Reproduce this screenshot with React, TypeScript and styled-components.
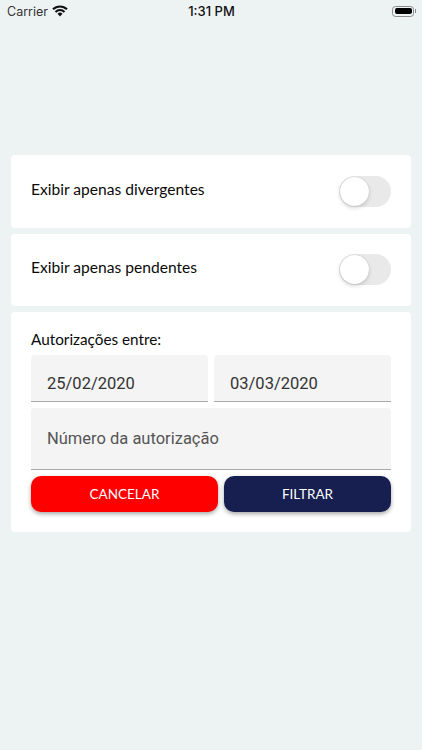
import styled, { createGlobalStyle } from "styled-components";

const GlobalStyle = createGlobalStyle`
  html, body {
    margin: 0;
    padding: 0;
    background-color: #edf3f3;
  }
`;

const Page = styled.div`
  display: flex;
  flex-direction: column;
  width: 422px;
  height: 750px;
  overflow: hidden;
  background-color: #edf3f3;
  font-family: "Lato", "Open Sans", sans-serif;
`;

const StatusBar = styled.div`
  display: grid;
  grid-template-columns: 1fr auto 1fr;
  align-items: center;
  height: 22px;
  padding: 0 6px 0 7px;
  font-family: "Inter", "Liberation Sans", sans-serif;
  color: #111;
`;

const Carrier = styled.div`
  display: flex;
  align-items: center;
  gap: 4px;
  font-size: 12.5px;
  color: #333;
`;

const Clock = styled.div`
  font-size: 13px;
  font-weight: 500;
`;

const Battery = styled.div`
  justify-self: end;
  display: flex;
  align-items: center;
`;

const BatteryBody = styled.div`
  box-sizing: border-box;
  width: 22px;
  height: 11px;
  padding: 1.5px;
  border: 1px solid #8a8a8a;
  border-radius: 3.5px;

  &::before {
    content: "";
    display: block;
    height: 100%;
    background-color: #000;
    border-radius: 2px;
  }
`;

const BatteryTip = styled.div`
  width: 1px;
  height: 4px;
  margin-left: 1px;
  background-color: #8a8a8a;
`;

const Content = styled.div`
  display: flex;
  flex-direction: column;
  gap: 6px;
  padding: 133px 11px 0;
`;

const Card = styled.div`
  background-color: #fff;
  border-radius: 4px;
`;

const ToggleCard = styled(Card)`
  display: flex;
  align-items: center;
  justify-content: space-between;
  height: 72.5px;
  box-sizing: border-box;
  padding: 0 20px;
`;

const ToggleLabel = styled.div`
  font-size: 15.6px;
  color: #0a0a0a;
  margin-top: -5px;
`;

const Track = styled.div`
  width: 52px;
  height: 31px;
  border-radius: 16px;
  background-color: #e9e9ea;
  display: flex;
  align-items: center;
  padding-left: 1px;
  box-sizing: border-box;
`;

const Knob = styled.div`
  width: 29px;
  height: 29px;
  border-radius: 50%;
  background-color: #fff;
  box-shadow: 0 2px 4px rgba(0, 0, 0, 0.16), 0 0 1px rgba(0, 0, 0, 0.2);
`;

const FilterCard = styled(Card)`
  display: flex;
  flex-direction: column;
  gap: 6px;
  padding: 17px 20px 20px;
`;

const FilterTitle = styled.div`
  font-size: 15.3px;
  line-height: 20px;
  color: #0a0a0a;
`;

const Row = styled.div`
  display: flex;
  gap: 6px;
`;

const Field = styled.div<{ $height: number; $muted?: boolean; $drop?: number }>`
  flex: 1;
  display: flex;
  align-items: center;
  height: ${({ $height }) => $height}px;
  box-sizing: border-box;
  padding: ${({ $drop }) => $drop ?? 0}px 16px 0;
  background-color: #f4f4f4;
  border-bottom: 1px solid #a9a9a9;
  border-radius: 4px 4px 0 0;
  font-family: "Roboto", "Liberation Sans", sans-serif;
  font-size: 16.5px;
  color: ${({ $muted }) => ($muted ? "#555" : "#333")};
`;

const Button = styled.div<{ $color: string; $grow: number }>`
  flex: ${({ $grow }) => $grow} 1 0;
  display: flex;
  align-items: center;
  justify-content: center;
  height: 36.5px;
  border-radius: 10px;
  background-color: ${({ $color }) => $color};
  box-shadow: 0 2px 4px rgba(0, 0, 0, 0.35);
  font-size: 13.5px;
  color: #fff;
`;

const WifiIcon = () => (
  <svg width="16" height="12" viewBox="0 0 16 12">
    <g fill="none" stroke="#111" strokeWidth="2.1">
      <path d="M1 4.300A10 10 0 0 1 15 4.300" />
      <path d="M3.500 6.900A6.400 6.400 0 0 1 12.500 6.900" />
    </g>
    <path d="M5.500 8.700A3.500 3.500 0 0 1 10.500 8.700L8 11.500z" fill="#111" />
  </svg>
);

const Toggle = () => (
  <Track>
    <Knob />
  </Track>
);

export default function App() {
  return (
    <Page>
      <GlobalStyle />
      <StatusBar>
        <Carrier>
          Carrier
          <WifiIcon />
        </Carrier>
        <Clock>1:31 PM</Clock>
        <Battery>
          <BatteryBody />
          <BatteryTip />
        </Battery>
      </StatusBar>
      <Content>
        <ToggleCard>
          <ToggleLabel>Exibir apenas divergentes</ToggleLabel>
          <Toggle />
        </ToggleCard>
        <ToggleCard>
          <ToggleLabel>Exibir apenas pendentes</ToggleLabel>
          <Toggle />
        </ToggleCard>
        <FilterCard>
          <FilterTitle>Autorizações entre:</FilterTitle>
          <Row>
            <Field $height={47} $drop={11}>
              25/02/2020
            </Field>
            <Field $height={47} $drop={11}>
              03/03/2020
            </Field>
          </Row>
          <Row>
            <Field $height={61.5} $muted>
              Número da autorização
            </Field>
          </Row>
          <Row>
            <Button $color="#ff0000" $grow={187}>
              CANCELAR
            </Button>
            <Button $color="#161f4f" $grow={167}>
              FILTRAR
            </Button>
          </Row>
        </FilterCard>
      </Content>
    </Page>
  );
}
